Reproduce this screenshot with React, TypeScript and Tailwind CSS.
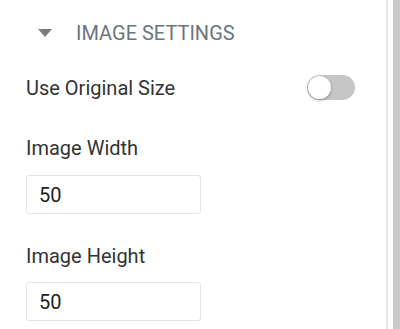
export default function App() {
  return (
    <div className="flex h-[329px] w-[400px] overflow-hidden bg-white font-['Roboto',sans-serif]">
      <div className="flex-1 border-r-2 border-[#e6e6e6] pl-[26px] pr-[31px]">
        <div className="mt-[21px] flex items-center leading-[24px]">
          <svg width="14" height="8" viewBox="0 0 14 8" className="ml-[12px] mr-[24px]">
            <path d="M0 0 H14 L7 8 Z" fill="#7b7b7b" />
          </svg>
          <span className="text-[20px] text-[#6c757d]">IMAGE SETTINGS</span>
        </div>

        <div className="mt-[30px] flex items-center justify-between">
          <span className="text-[20px] leading-[24px] text-[#333]">Use Original Size</span>
          <button
            type="button"
            className="relative h-[25px] w-[48px] rounded-full bg-[#c6c6c6]"
          >
            <span className="absolute left-[1px] top-[1px] h-[23px] w-[23px] rounded-full bg-white shadow-[0_1px_3px_rgba(0,0,0,0.35)]" />
          </button>
        </div>

        <label className="mt-[36px] block text-[20px] leading-[24px] text-[#333]">
          Image Width
          <input
            defaultValue="50"
            className="mt-[15px] block h-[39px] w-[175px] rounded-[3px] border border-[#e4e4e4] px-[12px] text-[20px] text-[#222] outline-none"
          />
        </label>

        <label className="mt-[30px] block text-[20px] leading-[24px] text-[#333]">
          Image Height
          <input
            defaultValue="50"
            className="mt-[14px] block h-[39px] w-[175px] rounded-[3px] border border-[#e4e4e4] px-[12px] text-[20px] text-[#222] outline-none"
          />
        </label>
      </div>
      <div className="ml-[5px] w-[7px] bg-[#c8c8c8]" />
    </div>
  );
}
